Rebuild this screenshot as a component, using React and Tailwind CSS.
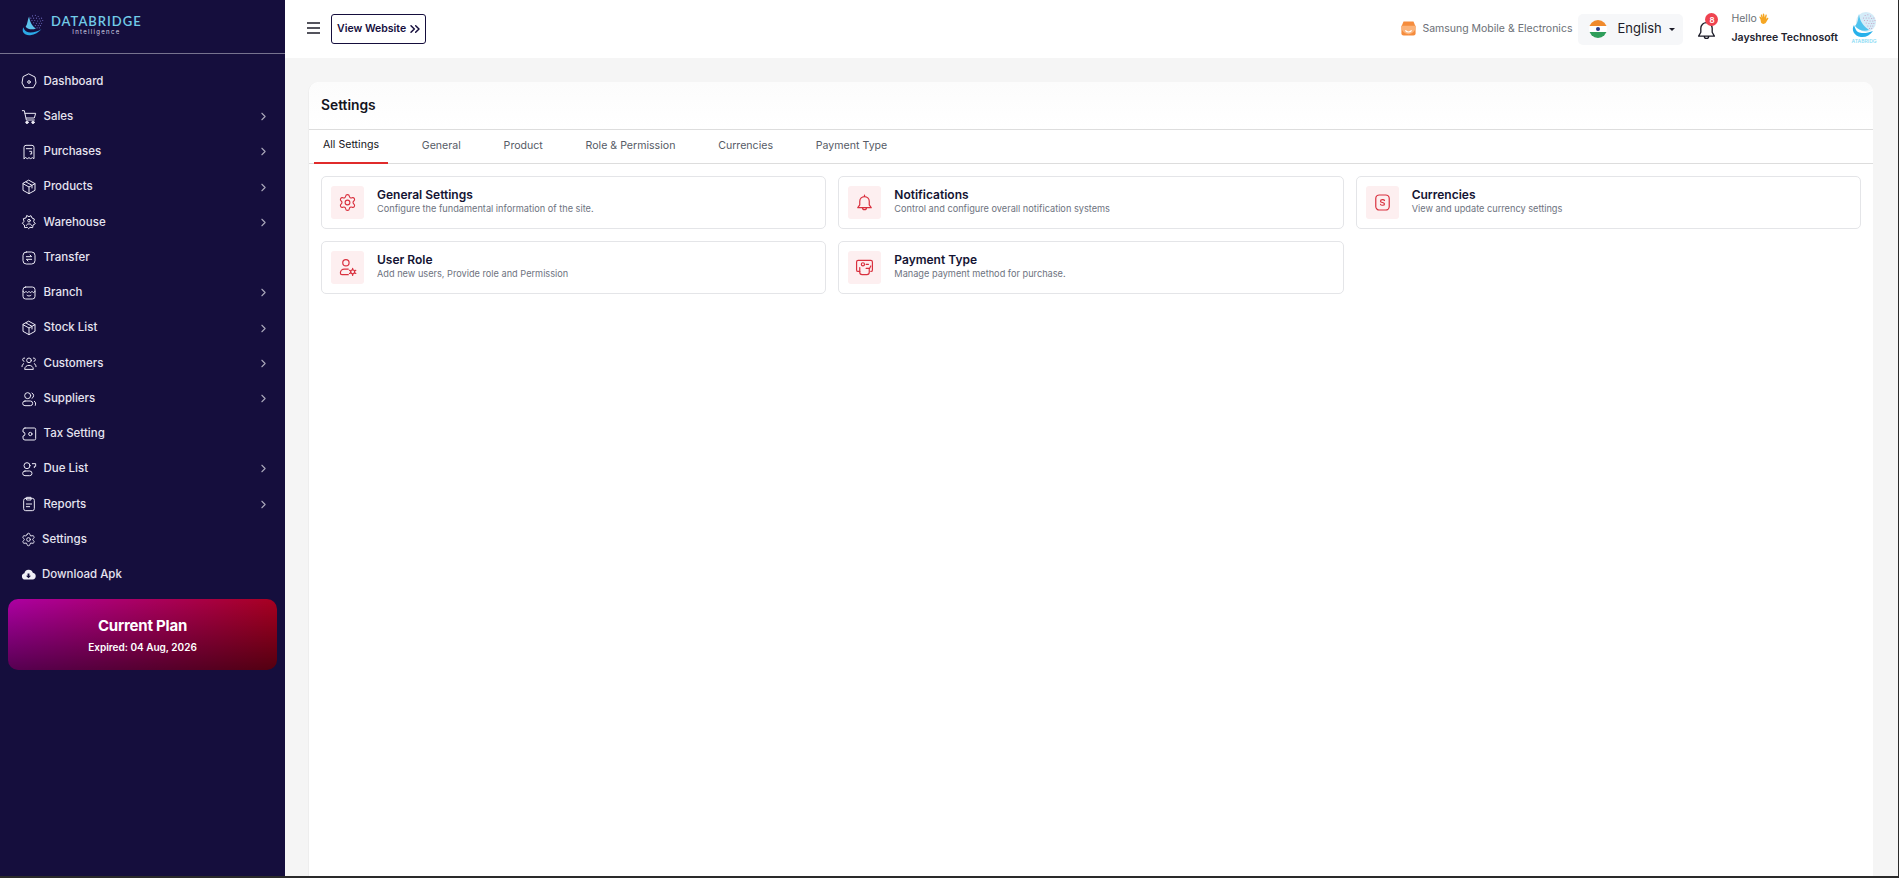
import { ChevronRight, ChevronsRight, Settings } from 'lucide-react'

const Ic = ({ children, className = 'w-[16px] h-[16px] text-[#eceaf5]' }) => (
  <svg viewBox="0 0 24 24" fill="none" stroke="currentColor" strokeWidth="1.5" strokeLinecap="round" strokeLinejoin="round" className={className}>
    {children}
  </svg>
)

const navIcons = {
  home: <><path d="M12 1.500l9 4.500 1.500 9-4 7h-13l-4-7L3 6z" /><circle cx="12" cy="13.500" r="2" /></>,
  cart: <><path d="M2 2.500h3l3 14h12" /><path d="M6 6.500h16l-2 7H8" /><circle cx="9" cy="20" r="1.800" fill="currentColor" /><circle cx="18" cy="20" r="1.800" fill="currentColor" /></>,
  receipt: <><path d="M4.500 22V5a3 3 0 013-3h9a3 3 0 013 3v17l-2.500-1.500L14.500 22 12 20.500 9.500 22 7 20.500z" /><path d="M8 7h8M13 11h3v4h-2" /></>,
  box: <><path d="M12 2l9 5v10l-9 5-9-5V7z" /><path d="M3 7l9 5 9-5M12 12v10M7.500 4.500l9 5v4" /></>,
  warehouse: <><path d="M9 2.500l3 1.500 3-1.500 1.500 3.500 3.500 1.500-1 4 2.500 3-3.500 2-.5 4-4-.5-2 2-2-2-4 .5-.5-4L2 14l2.500-3-1-4L7 6z" /><circle cx="12" cy="10" r="2" /><path d="M8 17c0-3 8-3 8 0" /></>,
  transfer: <><rect x="3" y="3" width="18" height="18" rx="5" /><path d="M8 10h8l-2.500-2.500M16 14H8l2.500 2.500" /></>,
  branch: <><rect x="3" y="3" width="18" height="18" rx="4" /><path d="M3 9.500c1.500 2.500 3 2.500 4.500 0 1.500 2.500 3 2.500 4.500 0 1.500 2.500 3 2.500 4.500 0 1.500 2.500 3 2.500 4.500 0M9 15.500c1.500 1.500 4.500 1.500 6 0" /></>,
  customers: <><circle cx="12" cy="8" r="3.500" /><path d="M5.500 21c0-7.500 13-7.500 13 0z" /><path d="M5.500 4.500a2.500 2.500 0 00-1 5M18.500 4.500a2.500 2.500 0 011 5M1.500 17.500c0-2 .5-3.500 2.500-4.500M22.500 17.500c0-2-.5-3.500-2.500-4.500" /></>,
  suppliers: <><circle cx="10" cy="7" r="4.500" /><rect x="2.500" y="15" width="15" height="7" rx="3.500" /><path d="M16.500 3a4.500 4.500 0 010 8M20 15.500c2 1 2.500 3 1.500 6" /></>,
  tax: <><path d="M6 3h14a2 2 0 012 2v14a2 2 0 01-2 2H6a3 3 0 01-3-3v-3a3 3 0 000-6V6a3 3 0 013-3z" /><circle cx="14" cy="12" r="2.500" /></>,
  due: <><circle cx="9" cy="7" r="4.500" /><rect x="2.500" y="15" width="14" height="7" rx="3.500" /><path d="M17 4h5v4h-2v2" /></>,
  reports: <><rect x="4" y="3.500" width="16" height="18.500" rx="3" /><path d="M9 2h6v4H9zM8 12h8M8 16h5" /></>,
}

const nav = [
  ['Dashboard', 'home', false],
  ['Sales', 'cart', true],
  ['Purchases', 'receipt', true],
  ['Products', 'box', true],
  ['Warehouse', 'warehouse', true],
  ['Transfer', 'transfer', false],
  ['Branch', 'branch', true],
  ['Stock List', 'box', true],
  ['Customers', 'customers', true],
  ['Suppliers', 'suppliers', true],
  ['Tax Setting', 'tax', false],
  ['Due List', 'due', true],
  ['Reports', 'reports', true],
]

const tabs = ['All Settings', 'General', 'Product', 'Role & Permission', 'Currencies', 'Payment Type']

const redIcon = 'w-[19px] h-[19px] text-[#d9303e]'
const cards = [
  {
    title: 'General Settings',
    text: 'Configure the fundamental information of the site.',
    icon: <Settings className={redIcon} strokeWidth={1.4} />,
  },
  {
    title: 'Notifications',
    text: 'Control and configure overall notification systems',
    icon: <Ic className={redIcon}><path d="M12 4.500a6 6 0 00-6 6V15l-2.500 3.500h17L18 15v-4.500a6 6 0 00-6-6zM12 2.500v2M9.500 18.500a2.500 2.500 0 005 0" /></Ic>,
  },
  {
    title: 'Currencies',
    text: 'View and update currency settings',
    icon: <Ic className={redIcon}><rect x="3.500" y="2.500" width="17" height="19" rx="4.500" /><path d="M14.500 9.500c-.5-1.500-5-1.500-5 .8s5 1.200 5 3.500-4.500 2-5 .5" strokeWidth="1.500" /></Ic>,
  },
  {
    title: 'User Role',
    text: 'Add new users, Provide role and Permission',
    icon: <Ic className={redIcon}><circle cx="10" cy="6" r="4" /><path d="M13 14H8a5 5 0 00-5 5 2 2 0 002 2h8" /><circle cx="18.500" cy="17.500" r="2.500" /><path d="M18.500 13v1.500M18.500 20.500V22M14.500 15.500l1.500 1M21 18.500l1.500 1M14.500 19.500l1.500-1M21 16.500l1.500-1" /></Ic>,
  },
  {
    title: 'Payment Type',
    text: 'Manage payment method for purchase.',
    icon: <Ic className={redIcon}><path d="M6 17H4a2 2 0 01-2-2V5a2 2 0 012-2h16a2 2 0 012 2v10a2 2 0 01-2 2" /><circle cx="10" cy="8" r="2" /><path d="M6 12v6a3 3 0 003 3h6a3 3 0 003-3v-4l2-4M14 13h4M14 8h3" /></Ic>,
  },
]

const logoDots = [
  [22, 4], [27, 3], [32, 5], [19, 8], [24, 8], [29, 8], [34, 9], [38, 8], [21, 12], [26, 12], [31, 13], [36, 13],
  [40, 12], [24, 16], [29, 17], [34, 17], [38, 17], [27, 21], [32, 21], [36, 21], [30, 25], [34, 25],
]

function Emblem({ className }) {
  return (
    <svg viewBox="0 0 44 40" className={className}>
      {logoDots.map(([x, y]) => (
        <circle key={`${x}-${y}`} cx={x} cy={y} r="1" fill="#6f6bc0" />
      ))}
      <path d="M16 5c-3 6-2 12-6 18 4 5 12 6 18 3-5-3-10-8-12-21z" fill="#5cc3ec" />
      <path d="M6 24C2 32 8 39 18 38c8-1 15-5 20-11-7 5-20 8-26 5-3-2-5-4-6-8z" fill="#2ba8e6" />
    </svg>
  )
}

function Avatar() {
  return (
    <div className="ml-[12px] w-[28px] flex flex-col items-center mb-[3px]">
      <svg viewBox="0 0 28 26" className="w-[28px] h-[26px]">
        <circle cx="16" cy="10" r="10" fill="#d4ecf8" />
        {logoDots.map(([x, y]) => (
          <circle key={`${x}-${y}`} cx={x * 0.55 + 3} cy={y * 0.62 + 1} r="0.5" fill="#c58fb8" />
        ))}
        <path d="M9 2c-1 5-1 9-4 12 3 4 9 6 14 4-4-3-9-7-10-16z" fill="#4fc3ee" />
        <path d="M4 13c-3 5 0 11 7 12 5 .5 9-2 12-6-5 2-11 3-15 1-2-1-3-4-4-7z" fill="#27b0ea" />
      </svg>
      <span className="mt-[1px] text-[5px] leading-[5px] font-semibold text-[#8edcf5] whitespace-nowrap">ATABRIDG</span>
    </div>
  )
}

function Sidebar() {
  return (
    <aside className="w-[285px] shrink-0 bg-[#150e3d] flex flex-col">
      <div className="h-[54px] border-b border-[#77738f] flex items-center pl-[20px] pb-[3px]">
        <Emblem className="w-[25px] h-[24px]" />
        <div className="ml-[6px] flex flex-col items-center">
          <span className="text-[13px] leading-[14px] font-semibold tracking-[1px] text-[#72cbe8] font-['Lato',sans-serif]">DATABRIDGE</span>
          <span className="text-[6px] leading-[8px] tracking-[1.300px] text-[#d5d5e5]">Intelligence</span>
        </div>
      </div>
      <nav className="flex flex-col pt-[9.800px]">
        {nav.map(([label, icon, more]) => (
          <div key={label} className="h-[35.24px] flex items-center pl-[21px] pr-[15px]">
            <Ic>{navIcons[icon]}</Ic>
            <span className="ml-[6.500px] text-[11.500px] font-medium text-[#e6e4f0]">{label}</span>
            {more && <ChevronRight className="ml-auto w-[13px] h-[13px] text-[#a9a7ba]" />}
          </div>
        ))}
        <div className="h-[35.24px] flex items-center pl-[21px]">
          <Settings className="w-[15px] h-[15px] text-[#eceaf5]" strokeWidth={1.5} />
          <span className="ml-[6px] text-[11.500px] font-medium text-[#e6e4f0]">Settings</span>
        </div>
        <div className="h-[35.24px] flex items-center pl-[21px]">
          <svg viewBox="0 0 24 24" className="w-[15px] h-[15px]">
            <path d="M6.500 20a5 5 0 01-1-9.900 7 7 0 0113.500-1 5.500 5.500 0 01-.5 10.900zM12 18l4-4h-2.500V10.500h-3V14H8z" fill="#f1f0f7" fillRule="evenodd" />
          </svg>
          <span className="ml-[6px] text-[11.500px] font-medium text-[#e6e4f0]">Download Apk</span>
        </div>
      </nav>
      <div className="mx-[8px] mt-[7px] h-[71px] rounded-[10px] bg-[linear-gradient(to_bottom,rgba(0,0,0,0),rgba(0,0,0,0.5)),linear-gradient(to_right,#ad00a3,#a80020)] flex flex-col items-center justify-center text-white">
        <span className="text-[15px] leading-[22px] font-bold tracking-[-0.2px] mb-[2px]">Current Plan</span>
        <span className="text-[10px] leading-[16px] font-semibold">Expired: 04 Aug, 2026</span>
      </div>
    </aside>
  )
}

function Header() {
  return (
    <header className="h-[58px] shrink-0 bg-white flex items-center justify-between pl-[21px] pr-[20px]">
      <div className="flex items-center gap-[10px]">
        <svg viewBox="0 0 15 12" className="w-[15px] h-[12px] mb-[2px]" stroke="#1c1c28" strokeWidth="1.300" fill="none">
          <path d="M1 1h13M1 6h13M1 11h13" />
        </svg>
        <button className="h-[30px] w-[95px] border border-[#150e3d] rounded-[3px] flex items-center pl-[5px] gap-[1px] text-[10.500px] font-semibold text-[#150e3d] mb-[1px]">
          View Website
          <ChevronsRight className="w-[16px] h-[16px]" strokeWidth={2.2} />
        </button>
      </div>
      <div className="flex items-center">
        <svg viewBox="0 0 24 24" className="w-[17px] h-[17px] mb-[1px]">
          <path d="M5 2h14l3 7v10a3 3 0 01-3 3H5a3 3 0 01-3-3V9z" fill="#f58c3d" />
          <path d="M2 8h20v2a3 3 0 01-20 0z" fill="#fbb37a" />
          <path d="M8 15c1.500 2.500 6.500 2.500 8 0" stroke="#fff" strokeWidth="1.600" fill="none" strokeLinecap="round" />
        </svg>
        <span className="ml-[5px] text-[10.500px] text-[#6b6f76] mb-[1px]">Samsung Mobile &amp; Electronics</span>
        <div className="ml-[6px] w-[105px] h-[31px] rounded-[5px] bg-[#f6f7f9] flex items-center pl-[11px]">
          <span className="w-[18px] h-[18px] rounded-full overflow-hidden flex flex-col">
            <span className="h-[6px] bg-[#f08a2c]" />
            <span className="h-[6px] bg-white flex items-center justify-center">
              <span className="w-[4px] h-[4px] rounded-full bg-[#2b3a8a]" />
            </span>
            <span className="h-[6px] bg-[#2f9e5b]" />
          </span>
          <span className="ml-[10px] text-[13px] text-[#1c1c28] mb-[1px]">English</span>
          <span className="ml-[7px] w-0 h-0 border-x-[3px] border-x-transparent border-t-[3.500px] border-t-[#1c1c28]" />
        </div>
        <div className="relative ml-[13px] mt-[3px]">
          <svg viewBox="0 0 24 24" fill="none" stroke="#1c1c28" strokeWidth="1.500" strokeLinejoin="round" className="w-[21px] h-[21px]">
            <path d="M12 3a6.500 6.500 0 00-6.500 6.500V14L3 18.500h18L18.500 14V9.500A6.500 6.500 0 0012 3zM9.500 18.500a2.500 2.500 0 005 0" />
          </svg>
          <span className="absolute -top-[7px] left-[9px] w-[13px] h-[13px] rounded-full bg-[#ef4350] text-white text-[8px] font-semibold flex items-center justify-center">8</span>
        </div>
        <div className="ml-[14px] flex flex-col mb-[2px]">
          <span className="flex items-center text-[10.500px] leading-[16px] text-[#6b6f76]">
            Hello
            <svg viewBox="0 0 24 24" className="ml-[1px] w-[12px] h-[12px]">
              <path d="M5 13L3 9c-1-1.500 1-3 2-1.500L7 10 5.500 4.500C5 3 7 2 8 3.500L10 9 9.500 2.500c0-2 2.500-2 3 0L13.500 9 15 4c.5-1.500 3-1 2.500 1l-1.500 7 2-2c1.500-1.500 3.500 0 2.500 1.500L16 19c-3 4-8 3.500-10 0z" fill="#f5a623" />
            </svg>
          </span>
          <span className="mt-[3px] text-[10.500px] leading-[16px] font-semibold text-[#23232f]">Jayshree Technosoft</span>
        </div>
        <Avatar />
      </div>
    </header>
  )
}

function SettingCard({ title, text, icon }) {
  return (
    <div className="h-[53px] border border-[#e4e5e8] rounded-[5px] flex items-center pl-[9px] bg-white">
      <div className="w-[33px] h-[33px] rounded-[3px] bg-[#fdeff0] flex items-center justify-center">{icon}</div>
      <div className="ml-[13px] flex flex-col mb-[3px]">
        <span className="text-[12px] leading-[15px] font-semibold text-[#141433]">{title}</span>
        <span className="text-[9.200px] leading-[13px] text-[#6e7380]">{text}</span>
      </div>
    </div>
  )
}

export default function App() {
  return (
    <div className="h-screen overflow-hidden bg-[#2a2a2a] pr-px pb-[2px] font-['Inter',sans-serif]">
      <div className="h-full flex">
        <Sidebar />
        <div className="flex-1 min-w-0 flex flex-col bg-[#f5f5f5]">
          <Header />
          <main className="flex-1 min-h-0 flex flex-col pt-[24px] pl-[23px] pr-[25px]">
            <div className="flex-1 bg-white rounded-t-[10px] border-l border-[#eeeeee]">
              <div className="h-[48px] border-b border-[#dddddd] rounded-t-[10px] bg-gradient-to-b from-[#fcfcfc] to-white flex items-center pl-[12px]">
                <h1 className="text-[13.800px] font-semibold text-[#141420]">Settings</h1>
              </div>
              <div className="h-[34px] border-b border-[#dddddd] flex pl-[5px] gap-[24.800px]">
                {tabs.map((t, i) => (
                  <div
                    key={t}
                    className={
                      i === 0
                        ? 'h-[34px] px-[9px] pb-[2px] flex items-center text-[10.600px] text-[#141420] border-b-2 border-[#e02b2b]'
                        : 'h-[34px] px-[9px] pb-[2px] flex items-center text-[10.600px] text-[#565b66]'
                    }
                  >
                    {t}
                  </div>
                ))}
              </div>
              <div className="grid grid-cols-3 gap-[12px] pt-[12px] pl-[12px] pr-[12px]">
                {cards.map((c) => (
                  <SettingCard key={c.title} {...c} />
                ))}
              </div>
            </div>
          </main>
        </div>
      </div>
    </div>
  )
}
